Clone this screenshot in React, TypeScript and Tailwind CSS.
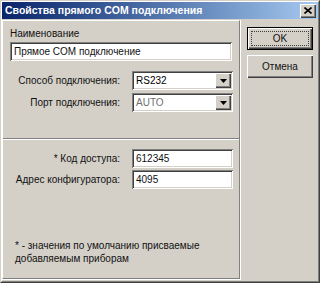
const raised =
  "shadow-[inset_1px_1px_0_#ffffff,inset_-1px_-1px_0_#404040,inset_-2px_-2px_0_#808080]";
const sunken =
  "shadow-[inset_1px_1px_0_#808080,inset_-1px_-1px_0_#ffffff,inset_2px_2px_0_#404040,inset_-2px_-2px_0_#d4d0c8]";

const TextBox = ({ value, className = "" }: { value: string; className?: string }) => (
  <div className={`h-[19px] bg-white ${sunken} pl-[4px] flex items-center ${className}`}>
    <span>{value}</span>
  </div>
);

const Select = ({ value, muted }: { value: string; muted?: boolean }) => (
  <div className={`w-[101px] h-[19px] bg-white ${sunken} flex items-stretch p-[2px]`}>
    <span className={`flex-1 pl-[2px] flex items-center ${muted ? "text-[#6f6f6f]" : "text-black"}`}>
      {value}
    </span>
    <div className={`w-[16px] bg-[#d4d0c8] ${raised} flex items-center justify-center`}>
      <svg width="7" height="4" viewBox="0 0 7 4">
        <path d="M0 0h7L3.5 4z" fill="#000" />
      </svg>
    </div>
  </div>
);

const Row = ({ label, children }: { label: string; children: React.ReactNode }) => (
  <div className="flex items-center">
    <div className="w-[118px] text-right pr-[1px]">{label}</div>
    <div className="ml-[11px]">{children}</div>
  </div>
);

export default function App() {
  return (
    <div
      className="w-[320px] h-[283px] bg-[#d4d0c8] border border-t-[#d4d0c8] border-l-[#d4d0c8] border-r-[#404040] border-b-[#404040] text-[10px] leading-[13px] text-[#111]"
      style={{ fontFamily: '"Liberation Sans", Arial, sans-serif' }}
    >
      <div className="h-full border border-t-white border-l-white border-r-[#808080] border-b-[#808080] flex flex-col">
        {/* title bar */}
        <div className="h-[17px] bg-gradient-to-r from-[#0a246a] to-[#a6caf0] flex items-center pl-[3px] pr-[2px]">
          <span className="flex-1 text-white font-bold text-[10.5px]">Свойства прямого COM подключения</span>
          <div className={`w-[16px] h-[14px] bg-[#d4d0c8] ${raised} flex items-center justify-center`}>
            <svg width="8" height="7" viewBox="0 0 8 7">
              <path d="M0.5 0.5l7 6M7.5 0.5l-7 6" stroke="#000" strokeWidth="1.6" />
            </svg>
          </div>
        </div>

        {/* body */}
        <div className="flex-1 flex pt-[1px]">
          <div className="w-[239px] border-r border-b border-r-white border-b-white mb-[1px]">
            <div className="h-full border-t border-l border-r border-b border-t-white border-l-white border-r-[#808080] border-b-[#808080] flex flex-col">
              <div className="pt-[6px] pl-[7px]">
                <div>Наименование</div>
                <TextBox value="Прямое COM подключение" className="mt-[2px] w-[222px]" />
              </div>

              <div className="mt-[10px] flex flex-col gap-[3px]">
                <Row label="Способ подключения:">
                  <Select value="RS232" />
                </Row>
                <Row label="Порт подключения:">
                  <Select value="AUTO" muted />
                </Row>
              </div>

              <div className="mt-[26px] border-t border-b border-t-[#808080] border-b-white" />

              <div className="mt-[9px] flex flex-col gap-[2px]">
                <Row label="* Код доступа:">
                  <TextBox value="612345" className="w-[101px]" />
                </Row>
                <Row label="Адрес конфигуратора:">
                  <TextBox value="4095" className="w-[101px]" />
                </Row>
              </div>

              <div className="mt-[50px] pl-[12px]">
                <div>* - значения по умолчанию присваемые</div>
                <div>добавляемым приборам</div>
              </div>
            </div>
          </div>

          {/* buttons */}
          <div className="flex flex-col pl-[6px] pt-[7px] gap-[5px]">
            <div className="w-[66px] h-[23px] border border-black bg-[#d4d0c8]">
              <div className={`h-full ${raised} flex items-center justify-center p-[3px]`}>
                <div className="w-full h-full border border-dotted border-[#404040] flex items-center justify-center">
                  OK
                </div>
              </div>
            </div>
            <div className={`w-[66px] h-[23px] bg-[#d4d0c8] ${raised} flex items-center justify-center`}>
              Отмена
            </div>
          </div>
        </div>
      </div>
    </div>
  );
}
